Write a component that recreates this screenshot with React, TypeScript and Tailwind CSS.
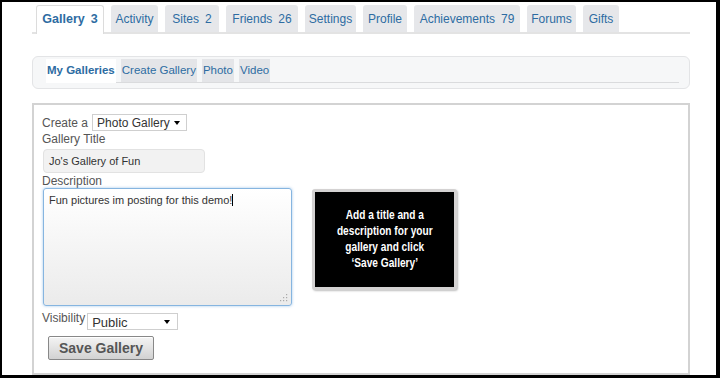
import React from 'react'

const tabs = [
  { label: 'Gallery', count: '3', w: 'w-[68px]', active: true },
  { label: 'Activity', w: 'w-[47px]' },
  { label: 'Sites', count: '2', w: 'w-[54px]' },
  { label: 'Friends', count: '26', w: 'w-[72px]' },
  { label: 'Settings', w: 'w-[51px]' },
  { label: 'Profile', w: 'w-[44px]' },
  { label: 'Achievements', count: '79', w: 'w-[106px]' },
  { label: 'Forums', w: 'w-[49px]' },
  { label: 'Gifts', w: 'w-[36px]' },
]

const subTabs = [
  { label: 'My Galleries', active: true },
  { label: 'Create Gallery' },
  { label: 'Photo' },
  { label: 'Video' },
]

function Arrow() {
  return <span className="w-0 h-0 border-l-[3.5px] border-r-[3.5px] border-t-[4px] border-l-transparent border-r-transparent border-t-black" />
}

export default function App() {
  return (
    <div className="w-[720px] h-[378px] bg-black pt-[2px] pl-[2px] pr-[4px] pb-[3px] font-['Liberation_Sans',Arial,sans-serif]">
      <div className="w-full h-full bg-white flex flex-col">
        {/* Main tabs */}
        <div className="ml-[30px] mt-[3px] w-[658px] h-[29px] pl-[4px] flex items-start gap-[7px] border-b-2 border-[#e3e3e3]">
          {tabs.map(t => (
            <div
              key={t.label}
              className={`${t.w} flex items-center justify-center rounded-t-[3px] whitespace-nowrap text-[#2d6ca2] ${
                t.active
                  ? 'h-[29px] bg-white border border-b-0 border-[#dcdcdc] font-bold text-[12.5px] pb-[2px]'
                  : 'h-[27px] bg-[#e6e7ea] text-[12px]'
              }`}
            >
              {t.label}
              {t.count && <span className="ml-[6px]">{t.count}</span>}
            </div>
          ))}
        </div>

        {/* Sub navigation */}
        <div className="ml-[30px] mt-[22px] w-[658px] h-[33px] rounded-[6px] border border-[#e3e4e6] bg-[#f6f7f8] pl-[13px] pr-[10px] pt-[2px]">
          <div className="h-[24px] flex items-stretch gap-[5px] border-b border-[#dadbdd]">
            {subTabs.map(s => (
              <div
                key={s.label}
                className={`flex items-center text-[#2d6ca2] whitespace-nowrap ${
                  s.active ? 'bg-white font-bold text-[11.5px] px-[1px] -mb-[1px]' : 'bg-[#e4e5e8] text-[11.5px] px-[1px]'
                }`}
              >
                {s.label}
              </div>
            ))}
          </div>
        </div>

        {/* Form box */}
        <div className="ml-[30px] mt-[14px] w-[658px] h-[272px] border-2 border-[#d3d3d3] pl-[8px] pt-[9px] text-[#555] text-[11.5px]">
          <div className="flex items-center h-[17px]">
            <span className="mr-[4px] text-[12px]">Create a</span>
            <div className="w-[95px] h-[17px] border border-[#cfcfcf] bg-white flex items-center justify-between pl-[4px] pr-[6px] text-[#333] text-[12px]">
              <span>Photo Gallery</span>
              <Arrow />
            </div>
          </div>

          <div className="mt-[1px] leading-[14px] text-[12px]">Gallery Title</div>
          <div className="mt-[3px] ml-[1px] w-[162px] h-[24px] rounded-[4px] border border-[#e2e2e2] bg-[#f2f2f2] flex items-center pl-[5px] text-[#333] text-[11px]">
            Jo's Gallery of Fun
          </div>

          <div className="mt-[1px] leading-[14px] text-[12px]">Description</div>
          <div className="flex items-start">
            <div className="relative ml-[1px] w-[249px] h-[118px] rounded-[3px] border border-[#86b5e0] shadow-[0_0_3px_rgba(100,160,220,0.6)] bg-gradient-to-b from-white to-[#ebebeb] pl-[5px] pt-[3px] text-[#333] text-[11px]">
              Fun pictures im posting for this demo!
              <span className="inline-block w-px h-[12px] bg-black align-[-2px]" />
              <svg className="absolute right-[3px] bottom-[3px]" width="9" height="9" viewBox="0 0 9 9">
                <rect x="7" y="1" width="1.2" height="1.2" fill="#aaa" />
                <rect x="4" y="4" width="1.2" height="1.2" fill="#aaa" />
                <rect x="7" y="4" width="1.2" height="1.2" fill="#aaa" />
                <rect x="1" y="7" width="1.2" height="1.2" fill="#aaa" />
                <rect x="4" y="7" width="1.2" height="1.2" fill="#aaa" />
                <rect x="7" y="7" width="1.2" height="1.2" fill="#aaa" />
              </svg>
            </div>
            <div className="ml-[20px] mt-[1px] w-[145px] h-[101px] rounded-[3px] border-[3px] border-[#d4d2d2] shadow-[1px_1px_2px_rgba(0,0,0,0.25)] bg-black flex items-center justify-center overflow-hidden">
              <p className="text-white font-bold text-center text-[13.5px] leading-[16px] whitespace-nowrap scale-x-[0.75] pb-[2px]">
                Add a title and a<br />description for your<br />gallery and click<br />‘Save Gallery’
              </p>
            </div>
          </div>

          <div className="flex items-start mt-[7px]">
            <span className="leading-[13px] text-[12px] -mt-[1px]">Visibility</span>
            <div className="ml-[2px] w-[91px] h-[17px] border border-[#cfcfcf] bg-white flex items-center justify-between pl-[4px] pr-[7px] text-[#333] text-[13px]">
              <span className="mt-[2px]">Public</span>
              <Arrow />
            </div>
          </div>

          <button className="mt-[6px] ml-[6px] w-[106px] h-[24px] rounded-[2px] border border-[#888] bg-gradient-to-b from-[#f4f4f4] to-[#d2d2d2] shadow-[inset_0_1px_0_#fff] text-[#555] font-bold text-[14px] flex items-center justify-center">
            Save Gallery
          </button>
        </div>
      </div>
    </div>
  )
}
